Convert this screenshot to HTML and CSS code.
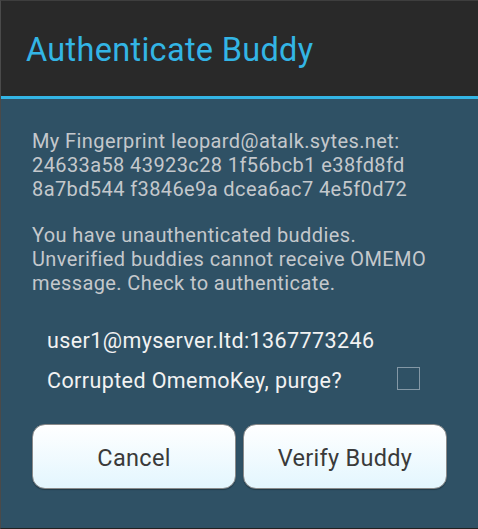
FILE: index.html
```html
<!DOCTYPE html>
<html>
<head>
<meta charset="utf-8">
<link rel="stylesheet" href="styles.css">
</head>
<body>
<div class="dialog">
  <div class="titlebar">
    <h1 class="title">Authenticate Buddy</h1>
  </div>
  <div class="content">
    <p class="info">My Fingerprint leopard@atalk.sytes.net:<br>24633a58 43923c28 1f56bcb1 e38fd8fd<br>8a7bd544 f3846e9a dcea6ac7 4e5f0d72</p>
    <p class="info warn">You have unauthenticated buddies.<br>Unverified buddies cannot receive OMEMO<br>message. Check to authenticate.</p>
    <div class="buddy">
      <div class="buddy-id">user1@myserver.ltd:1367773246</div>
      <div class="buddy-row">
        <span class="buddy-label">Corrupted OmemoKey, purge?</span>
        <span class="checkbox"></span>
      </div>
    </div>
    <div class="actions">
      <button class="btn">Cancel</button>
      <button class="btn">Verify Buddy</button>
    </div>
  </div>
</div>
</body>
</html>
```
FILE: styles.css
```css
html, body {
  margin: 0;
  padding: 0;
  background: #2f5165;
}
body {
  font-family: Roboto, "Noto Sans", sans-serif;
  width: 478px;
  height: 529px;
  overflow: hidden;
}
.dialog {
  width: 478px;
  height: 529px;
  box-sizing: border-box;
  border-left: 1px solid #4a4a4a;
  border-top: 1px solid #3e3e3e;
  border-bottom: 1px solid #222;
  display: flex;
  flex-direction: column;
  background: #2f5165;
}
.titlebar {
  height: 95px;
  background: #292929;
  border-bottom: 3px solid #33b5e5;
  display: flex;
  align-items: center;
  padding-left: 25px;
}
.title {
  margin: 0;
  font-weight: 400;
  font-size: 32.5px;
  letter-spacing: 0.3px;
  color: #33b5e5;
  padding-top: 3px;
}
.content {
  padding: 9px 31px 0 31px;
  display: flex;
  flex-direction: column;
}
.info {
  margin: 21px 0 0 0;
  color: #c4c8cc;
  font-size: 20px;
  letter-spacing: 0.4px;
  line-height: 24px;
}
.warn {
  margin-top: 22px;
}
.buddy {
  padding: 33px 0 0 15px;
  display: flex;
  flex-direction: column;
}
.buddy-id {
  color: #f2f2f2;
  font-size: 21.5px;
  letter-spacing: 0.4px;
  line-height: 26px;
}
.buddy-row {
  display: flex;
  align-items: center;
  justify-content: space-between;
  margin-top: 14px;
  padding-right: 27px;
}
.buddy-label {
  color: #f2f2f2;
  font-size: 21.5px;
  letter-spacing: 0.4px;
  line-height: 26px;
}
.checkbox {
  width: 21px;
  height: 21px;
  margin-top: -5px;
  border: 1px solid #8498a6;
}
.actions {
  display: flex;
  gap: 7px;
  margin-top: 30px;
}
.btn {
  flex: 1;
  height: 65px;
  padding-top: 3px;
  border: 1.5px solid #8a8a8a;
  border-radius: 13px;
  background: linear-gradient(#ffffff, #e3f6fe);
  font-family: Roboto, "Noto Sans", sans-serif;
  font-size: 23.5px;
  letter-spacing: 0.3px;
  color: #3a3a3a;
  box-shadow: 0 1px 1px rgba(0,0,0,0.3);
}
```
